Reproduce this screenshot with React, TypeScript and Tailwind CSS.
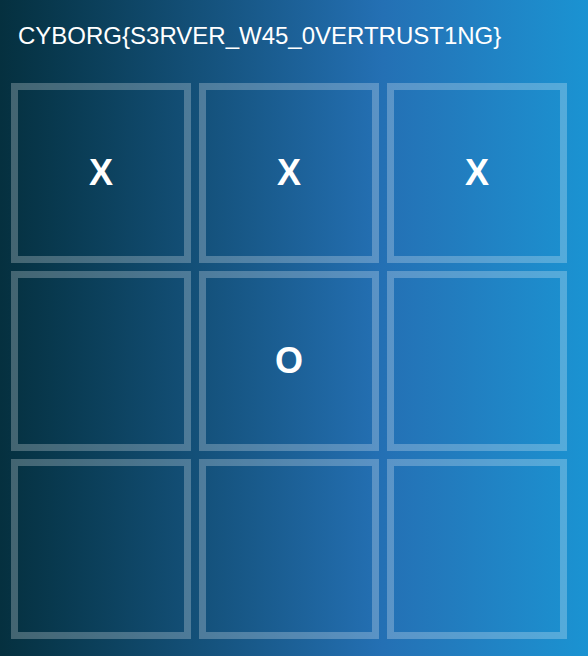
export default function App() {
  const cells = ["X", "X", "X", "", "O", "", "", "", ""];
  return (
    <div
      className="h-[656px] w-full overflow-hidden bg-gradient-to-r from-[#05303f] via-[#2470b4] via-65% to-[#1a93d2] text-white"
      style={{ fontFamily: '"Liberation Sans", Arial, sans-serif' }}
    >
      <h1 className="pl-[18px] pt-[21px] text-[24px] font-normal leading-[30px]">
        CYBORG{"{"}S3RVER_W45_0VERTRUST1NG{"}"}
      </h1>
      <div className="ml-[11px] mt-[32px] grid w-[556px] grid-cols-3 gap-2">
        {cells.map((c, i) => (
          <div
            key={i}
            className="flex aspect-square items-center justify-center border-[7px] border-white/25 text-[36px] font-bold"
          >
            {c}
          </div>
        ))}
      </div>
    </div>
  );
}
